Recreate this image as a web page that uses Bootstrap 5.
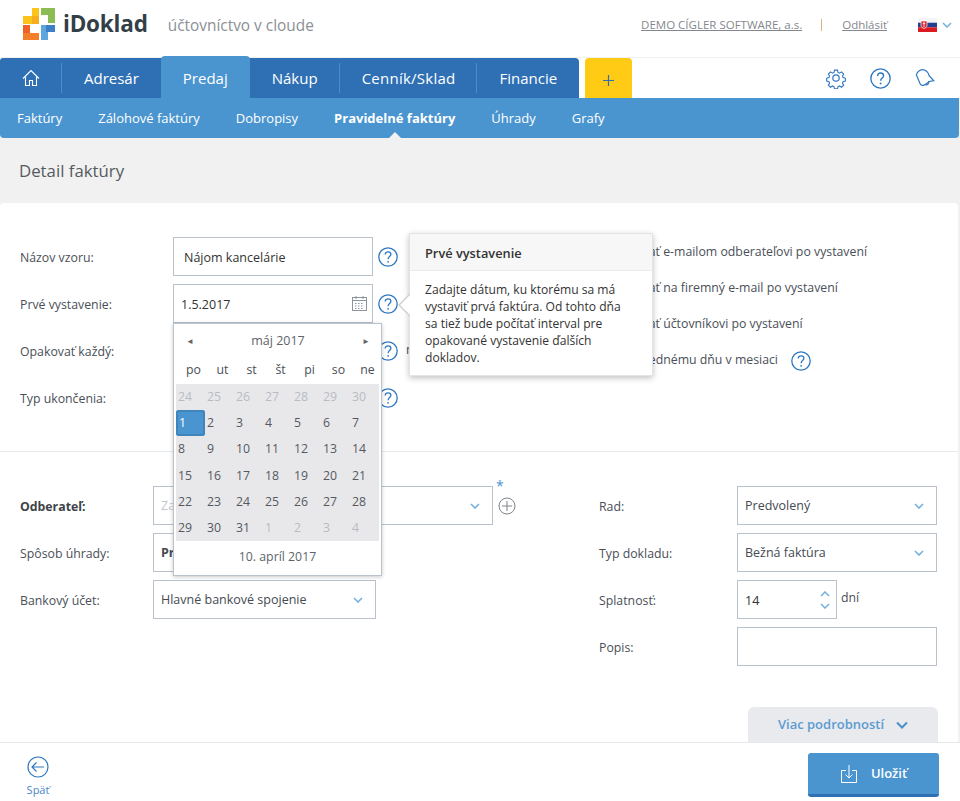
<!DOCTYPE html>
<html lang="sk">
<head>
    <meta charset="utf-8">
    <title>iDoklad</title>
    <link rel="stylesheet" href="https://cdn.jsdelivr.net/npm/bootstrap@5.3.0/dist/css/bootstrap.min.css">
    <style>
        /* Global */
        body {
            font-family: "Open Sans", "Liberation Sans", sans-serif;
            font-size: 12.3px;
            color: #4a4f57;
            background: #f1f1f1;
            height: 801px;
            overflow: hidden;
        }
        a { color: inherit; }

        /* Top header */
        .top-head { height: 58px; background: #fff; padding-left: 23px; padding-bottom: 9px; border-bottom: 1px solid #f1f1f1; }
        .brand-name { font-size: 22.5px; font-weight: 700; color: #333f48; margin-left: 7px; line-height: 1; letter-spacing: -.2px; }
        .brand-claim { font-size: 15.4px; color: #8b9096; margin-left: 20px; margin-top: 4px; }
        .user-links { margin-left: auto; padding-right: 8px; font-size: 11.5px; color: #84888e; margin-top: 2px; }
        .user-sep { width: 1px; height: 12px; background: #d9b48a; margin: 0 20px 0 19px; }
        .flag-box { margin-left: 31px; gap: 5px; }

        /* Main tabs */
        .tab-bar { height: 40px; background: #fff; position: relative; }
        .main-tabs { background: #2f70b5; border-top-right-radius: 4px; border-top-left-radius: 3px; height: 40px; width: 579px; flex-wrap: nowrap; }
        .main-tabs .nav-link { color: #fff; font-size: 15px; padding: 0 22px; line-height: 40px; position: relative; white-space: nowrap; }
        .main-tabs .nav-link.has-sep::after { content: ""; position: absolute; right: 0; top: 5px; height: 30px; width: 1px; background: #4d8cc8; }
        .main-tabs .nav-link.home-link { width: 62px; height: 40px; padding: 0; display: flex; align-items: center; justify-content: center; }
        .main-tabs .nav-link.wide-tab { padding-right: 22px; letter-spacing: .25px; }
        .main-tabs .nav-link.active { background: #4a95d0; height: 42px; margin-top: -2px; line-height: 44px; border-radius: 4px 4px 0 0; }
        .add-tab { width: 47px; height: 40px; margin-left: 6px; padding-top: 4px; background: #ffcb14; border-radius: 4px 4px 0 0; }
        .tool-icons { margin-left: auto; gap: 23px; padding-right: 24px; }

        /* Sub navigation */
        .sub-bar { height: 40px; background: #4a95d0; border-radius: 0 0 4px 4px; width: 959px; padding-left: 17px; gap: 36px; flex-wrap: nowrap; }
        .sub-bar a { color: #fff; text-decoration: none; font-size: 13px; line-height: 40px; position: relative; white-space: nowrap; }
        .sub-bar a.current { font-weight: 700; }
        .sub-bar a.current::after { content: ""; position: absolute; left: 50%; bottom: 0; margin-left: -6px; border: 6px solid transparent; border-top: 0; border-bottom-color: #f1f1f1; }

        /* Page title */
        .page-title { height: 65px; padding: 2px 0 0 19px; font-size: 16.8px; color: #555a60; display: flex; align-items: center; margin: 0; font-weight: 400; }

        /* Form sheet */
        .sheet { width: 958px; height: 539px; background: #fff; border-radius: 4px 4px 0 0; position: relative; }
        .sheet-top { padding: 34px 0 0 20px; height: 249px; border-bottom: 1px solid #e9eaec; }
        .sheet-bottom { padding-top: 34px; }
        .frm-row { height: 39px; margin-bottom: 8px; align-items: center; }
        .frm-label { width: 153px; flex: none; margin-top: 4px; margin-bottom: 0; }
        .frm-label.narrow { width: 133px; }
        .frm-label.right { width: 138px; }
        .form-control, .form-select {
            border: 1px solid #b9c2cd;
            border-radius: 0;
            height: 39px;
            padding-top: 7px;
            padding-bottom: 5px;
            font-size: 12.5px;
            color: #444a52;
            box-shadow: none;
        }
        .form-select {
            padding-left: 7px;
            background-size: 10px 6px;
            background-position: right 12px center;
            background-image: url("data:image/svg+xml,%3Csvg xmlns='http://www.w3.org/2000/svg' viewBox='0 0 10 6'%3E%3Cpath d='M1 1l4 4 4-4' fill='none' stroke='%2373b0e0' stroke-width='1.6'/%3E%3C/svg%3E");
        }
        .w-name { width: 200px; padding-left: 10px; color: #333; }
        .w-date { width: 200px; padding-left: 7px; color: #333; }
        .w-wide { width: 340px; }
        .w-mid { width: 223px; }
        .w-full { width: 200px; }
        .w-num { width: 100px; padding-left: 7px; color: #333; }
        .help-gap { margin-left: 5px; }
        .date-wrap { width: 200px; }
        .cal-ico { position: absolute; right: 6px; top: 12px; }
        .form-select.ph-text { color: #c3c6cb; }
        .bold-label { font-weight: 700; color: #3e4349; }
        .select-strong { font-weight: 700; color: #444a52; }

        /* Checks on the right of the top form */
        .mail-opts { position: absolute; left: 625px; top: 40px; }
        .mail-opts div { height: 36px; line-height: 18px; white-space: nowrap; display: flex; align-items: flex-start; }
        .opt-help { margin-left: 13px; }

        /* Date picker */
        .cal-pop {
            position: absolute; left: 0; top: 39px; z-index: 20;
            width: 209px; height: 253px; background: #fff;
            border: 1px solid #b9c2cd;
            box-shadow: 0 1px 4px rgba(0,0,0,.22);
            padding: 0 2px;
        }
        .cal-head { height: 34px; align-items: center; justify-content: space-between; padding: 0 9px 0 10px; font-size: 12.5px; color: #5e646b; }
        .cal-arrow { font-size: 8px; color: #666; }
        .cal-days, .cal-grid { display: grid; grid-template-columns: repeat(7, 29px); }
        .cal-days { height: 26px; align-items: center; padding: 0 0 1px 3px; }
        .cal-days span { text-align: center; }
        .cal-grid { background: #e8e8eb; grid-auto-rows: 26.2px; }
        .cal-grid span { padding-left: 2px; line-height: 26px; color: #55595f; }
        .cal-grid span.off { color: #b7bcc2; }
        .cal-grid span.picked { background: #4a95d0; color: #fff; border-radius: 3px; box-shadow: inset 0 0 0 2px #3f85bd; padding-left: 3px; }
        .cal-today { text-align: center; line-height: 32px; color: #5e646b; }

        /* Popover */
        .help-pop { position: absolute; left: 409px; top: 30px; width: 244px; max-width: 244px; font-family: inherit; border-radius: 0; border-color: #e4e4e4; box-shadow: 0 2px 6px rgba(0,0,0,.25); z-index: 30; }
        .help-pop .popover-header { background: #f7f7f7; font-size: 12.8px; font-weight: 600; color: #333; padding: 0 15px; line-height: 38px; height: 37px; margin: 0; border-radius: 0; border-bottom: 1px solid #ebebeb; }
        .help-pop .popover-body { padding: 10px 21px 0 15px; font-size: 12.1px; line-height: 17px; color: #333; height: 104px; }
        .help-pop .popover-arrow { position: absolute; top: 59px; left: -12px; width: 12px; height: 24px; z-index: 31; }
        .help-pop .popover-arrow::before,
        .help-pop .popover-arrow::after { content: ""; position: absolute; top: 0; display: block; border-style: solid; border-width: 12px 12px 12px 0; border-color: transparent; }
        .help-pop .popover-arrow::before { left: 0; border-right-color: #cfcfcf; }
        .help-pop .popover-arrow::after { left: 2px; border-right-color: #fff; }

        /* Lower area */
        .col-left { width: 579px; padding-left: 20px; flex: none; }
        .col-right { padding-left: 20px; }
        .req-star { position: absolute; left: 476px; top: -11px; color: #4a95d0; font-size: 14px; }
        .more-btn { position: absolute; right: 20px; bottom: 0; width: 190px; height: 35px; background: #e9eaee; border-radius: 6px 6px 0 0; color: #5c9bd1; font-weight: 600; border: 0; font-size: 13px; gap: 12px; }
        .spin-wrap { width: 100px; }
        .spin-ico { position: absolute; right: 6px; top: 11px; }
        .days-text { margin-left: 4px; margin-top: -3px; }

        /* Footer */
        .page-foot { height: 59px; background: #fff; border-top: 1px solid #e6e7ea; position: relative; z-index: 5; }
        .back-link { width: 76px; text-decoration: none; color: #4a86c5; font-size: 11px; padding-top: 13px; line-height: 1; }
        .back-link svg { margin-bottom: 6px; }
        .save-btn { position: absolute; left: 808px; top: 10px; width: 131px; height: 44px; background: #4a95d0; border: 0; border-bottom: 3px solid #2f70b5; border-radius: 3px; color: #fff; font-weight: 600; font-size: 13px; gap: 13px; }
        .save-btn:hover { background: #4a95d0; color: #fff; }
    </style>
</head>
<body>
    <!-- Icons used more than once -->
    <svg width="0" height="0" class="position-absolute">
        <symbol id="ico-help" viewBox="0 0 20 20">
            <circle cx="10" cy="10" r="9.2" fill="#fff" stroke="#2f78c0" stroke-width="1.3"/>
            <path d="M7.2 7.6c0-1.7 1.2-2.8 2.9-2.8s2.8 1 2.8 2.5c0 2.300-2.800 2.300-2.800 4.900" fill="none" stroke="#2f78c0" stroke-width="1.3"/>
            <circle cx="10.100" cy="14.800" r=".9" fill="#2f78c0"/>
        </symbol>
    </svg>

    <!-- Header -->
    <header class="top-head d-flex align-items-center">
        <svg width="33" height="33" viewBox="0 0 33 33">
            <path d="M9 0h7v16H0V8h9z" fill="#fcc31c"/>
            <path d="M9 8h7v8H9z" fill="#f6ae1d"/>
            <path d="M18 0h14v15h-7V7h-7z" fill="#8dbb54"/>
            <path d="M0 17h7v8h9v7H0z" fill="#f47f2a"/>
            <path d="M0 17h7v8H0z" fill="#ef6128"/>
            <path d="M18 17h14v7h-7v8h-7z" fill="#5ea7de"/>
            <path d="M23 17h9v7h-9z" fill="#3d7fc6"/>
        </svg>
        <span class="brand-name">iDoklad</span>
        <span class="brand-claim">účtovníctvo v cloude</span>
        <div class="user-links d-flex align-items-center">
            <a href="#">DEMO CÍGLER SOFTWARE, a.s.</a>
            <span class="user-sep"></span>
            <a href="#">Odhlásiť</a>
            <span class="flag-box d-flex align-items-center">
                <svg width="19" height="14" viewBox="0 0 19 14">
                    <rect width="19" height="4.700" fill="#f4f4f6"/>
                    <rect y="4.700" width="19" height="4.600" fill="#24408e"/>
                    <rect y="9.300" width="19" height="4.700" fill="#dc1a22"/>
                    <path d="M3 3h6v4.500c0 1.500-1.500 2.500-3 3-1.500-.5-3-1.500-3-3z" fill="#e0262d" stroke="#fff" stroke-width=".7"/>
                    <path d="M6 4v5M4.800 5.500h2.400" stroke="#fff" stroke-width=".8"/>
                </svg>
                <svg width="10" height="6" viewBox="0 0 10 6"><path d="M1 1l4 4 4-4" fill="none" stroke="#73b0e0" stroke-width="1.500"/></svg>
            </span>
        </div>
    </header>

    <!-- Main tabs -->
    <div class="tab-bar d-flex">
        <ul class="nav main-tabs">
            <li class="nav-item">
                <a class="nav-link home-link has-sep" href="#">
                    <svg width="18" height="18" viewBox="0 0 18 18" fill="none" stroke="#fff" stroke-width="1.100"><path d="M1 9.500L9 1.500l8 8M3.500 8v8.500h4v-5h3v5h4V8"/></svg>
                </a>
            </li>
            <li class="nav-item"><a class="nav-link" href="#">Adresár</a></li>
            <li class="nav-item"><a class="nav-link active" href="#">Predaj</a></li>
            <li class="nav-item"><a class="nav-link has-sep" href="#">Nákup</a></li>
            <li class="nav-item"><a class="nav-link has-sep wide-tab" href="#">Cenník/Sklad</a></li>
            <li class="nav-item"><a class="nav-link" href="#">Financie</a></li>
        </ul>
        <a class="add-tab d-flex align-items-center justify-content-center" href="#">
            <svg width="13" height="13" viewBox="0 0 13 13"><path d="M6.500 1v11M1 6.500h11" stroke="#2f70b5" stroke-width="1.200"/></svg>
        </a>
        <div class="tool-icons d-flex align-items-center">
            <svg width="22" height="22" viewBox="0 0 24 24" fill="none" stroke="#2f78c0" stroke-width="1.300"><circle cx="12" cy="12" r="3.500"/><path d="M10.200 2.500h3.600l.6 2.800 1.800.8 2.500-1.500 2.500 2.600-1.500 2.400.7 1.800 2.800.7v3.600l-2.800.6-.7 1.800 1.500 2.400-2.500 2.500-2.500-1.500-1.800.8-.6 2.700h-3.600l-.6-2.700-1.800-.8-2.500 1.500-2.500-2.500 1.500-2.400-.7-1.800-2.800-.6v-3.600l2.800-.7.7-1.800-1.500-2.400 2.500-2.600 2.500 1.500 1.800-.8z" transform="translate(1.100 1.100) scale(.91)"/></svg>
            <svg width="21" height="21"><use href="#ico-help"/></svg>
            <svg width="22" height="22" viewBox="0 0 24 24" fill="none" stroke="#2f78c0" stroke-width="1.300"><path d="M2.500 9.500C3.500 6 8 2.500 12 4.500c3 1.500 4 3.500 4.500 6l5 5.500c-3.500 0-6 1-8.500 3.500-2.500 2-4.500 2-6 .5L2.500 9.500z" transform="translate(0 -1)"/><path d="M16 16.500c.5 2.500-1 4.500-3.500 4" transform="translate(0 -1)"/></svg>
        </div>
    </div>

    <!-- Sub navigation -->
    <nav class="sub-bar d-flex">
        <a href="#">Faktúry</a>
        <a href="#">Zálohové faktúry</a>
        <a href="#">Dobropisy</a>
        <a href="#" class="current">Pravidelné faktúry</a>
        <a href="#">Úhrady</a>
        <a href="#">Grafy</a>
    </nav>

    <h1 class="page-title">Detail faktúry</h1>

    <!-- Form -->
    <main class="sheet">
        <section class="sheet-top position-relative">
            <div class="frm-row d-flex">
                <label class="frm-label">Názov vzoru:</label>
                <input class="form-control w-name" value="Nájom kancelárie">
                <svg class="help-gap" width="20" height="20"><use href="#ico-help"/></svg>
            </div>
            <div class="frm-row d-flex">
                <label class="frm-label">Prvé vystavenie:</label>
                <div class="date-wrap position-relative">
                    <input class="form-control w-date" value="1.5.2017">
                    <svg class="cal-ico" width="15" height="15" viewBox="0 0 15 15" fill="none" stroke="#8d949c"><rect x=".5" y="1.500" width="14" height="13"/><path d="M.5 4.500h14M4 0v3M11 0v3"/><path d="M3 7.500h9M3 10h9M3 12.500h9" stroke-dasharray="1.500 1.500"/></svg>

                    <!-- Date picker -->
                    <div class="cal-pop">
                        <div class="cal-head d-flex"><span class="cal-arrow">◄</span><span>máj 2017</span><span class="cal-arrow">►</span></div>
                        <div class="cal-days"><span>po</span><span>ut</span><span>st</span><span>št</span><span>pi</span><span>so</span><span>ne</span></div>
                        <div class="cal-grid">
                            <span class="off">24</span><span class="off">25</span><span class="off">26</span><span class="off">27</span><span class="off">28</span><span class="off">29</span><span class="off">30</span>
                            <span class="picked">1</span><span>2</span><span>3</span><span>4</span><span>5</span><span>6</span><span>7</span>
                            <span>8</span><span>9</span><span>10</span><span>11</span><span>12</span><span>13</span><span>14</span>
                            <span>15</span><span>16</span><span>17</span><span>18</span><span>19</span><span>20</span><span>21</span>
                            <span>22</span><span>23</span><span>24</span><span>25</span><span>26</span><span>27</span><span>28</span>
                            <span>29</span><span>30</span><span>31</span><span class="off">1</span><span class="off">2</span><span class="off">3</span><span class="off">4</span>
                        </div>
                        <div class="cal-today">10. apríl 2017</div>
                    </div>
                </div>
                <svg class="help-gap" width="20" height="20"><use href="#ico-help"/></svg>
            </div>
            <div class="frm-row d-flex">
                <label class="frm-label">Opakovať každý:</label>
                <div class="date-wrap"></div>
                <svg class="help-gap" width="20" height="20"><use href="#ico-help"/></svg>
                <span class="ms-2">m</span>
            </div>
            <div class="frm-row d-flex">
                <label class="frm-label">Typ ukončenia:</label>
                <div class="date-wrap"></div>
                <svg class="help-gap" width="20" height="20"><use href="#ico-help"/></svg>
            </div>

            <div class="mail-opts">
                <div>Poslať e-mailom odberateľovi po vystavení</div>
                <div>Poslať na firemný e-mail po vystavení</div>
                <div>Poslať účtovníkovi po vystavení</div>
                <div>Poslednému dňu v mesiaci
                    <svg class="opt-help" width="20" height="20"><use href="#ico-help"/></svg>
                </div>
            </div>

            <!-- Popover -->
            <div class="popover bs-popover-end help-pop" role="tooltip">
                <div class="popover-arrow"></div>
                <h3 class="popover-header">Prvé vystavenie</h3>
                <div class="popover-body">Zadajte dátum, ku ktorému sa má vystaviť prvá faktúra. Od tohto dňa sa tiež bude počítať interval pre opakované vystavenie ďalších dokladov.</div>
            </div>
        </section>

        <section class="sheet-bottom d-flex">
            <div class="col-left">
                <div class="frm-row d-flex position-relative">
                    <label class="frm-label narrow bold-label">Odberateľ:</label>
                    <select class="form-select w-wide ph-text"><option>Zadajte názov</option></select>
                    <span class="req-star">*</span>
                    <svg class="help-gap" width="18" height="18" viewBox="0 0 18 18" fill="none" stroke="#7d848b"><circle cx="9" cy="9" r="8"/><path d="M9 4v10M4 9h10"/></svg>
                </div>
                <div class="frm-row d-flex">
                    <label class="frm-label narrow">Spôsob úhrady:</label>
                    <select class="form-select w-mid select-strong"><option>Prevodom</option></select>
                </div>
                <div class="frm-row d-flex">
                    <label class="frm-label narrow">Bankový účet:</label>
                    <select class="form-select w-mid"><option>Hlavné bankové spojenie</option></select>
                </div>
            </div>
            <div class="col-right">
                <div class="frm-row d-flex">
                    <label class="frm-label right">Rad:</label>
                    <select class="form-select w-full"><option>Predvolený</option></select>
                </div>
                <div class="frm-row d-flex">
                    <label class="frm-label right">Typ dokladu:</label>
                    <select class="form-select w-full"><option>Bežná faktúra</option></select>
                </div>
                <div class="frm-row d-flex">
                    <label class="frm-label right">Splatnosť:</label>
                    <div class="spin-wrap position-relative">
                        <input class="form-control w-num" value="14">
                        <svg class="spin-ico" width="12" height="18" viewBox="0 0 12 18" fill="none" stroke="#73b0e0" stroke-width="1.500"><path d="M2 5l4-4 4 4M2 13l4 4 4-4"/></svg>
                    </div>
                    <span class="days-text">dní</span>
                </div>
                <div class="frm-row d-flex">
                    <label class="frm-label right">Popis:</label>
                    <input class="form-control w-full">
                </div>
            </div>
        </section>

        <button class="btn more-btn d-flex align-items-center justify-content-center" type="button">
            Viac podrobností
            <svg width="12" height="8" viewBox="0 0 12 8"><path d="M1 1.500l5 5 5-5" fill="none" stroke="#4a8ecb" stroke-width="2"/></svg>
        </button>
    </main>

    <!-- Footer -->
    <footer class="page-foot">
        <a class="back-link d-flex flex-column align-items-center" href="#">
            <svg width="22" height="22" viewBox="0 0 22 22" fill="none" stroke="#2f78c0" stroke-width="1.200"><circle cx="11" cy="11" r="10"/><path d="M17 11H5M9.500 6.500L5 11l4.500 4.500"/></svg>
            Späť
        </a>
        <button class="btn save-btn d-flex align-items-center justify-content-center" type="button">
            <svg width="18" height="20" viewBox="0 0 18 20" fill="none" stroke="#fff"><path d="M6 6.500H1.500v12h15v-12H12M9 1v13M5.500 10.500L9 14l3.500-3.500"/></svg>
            Uložiť
        </button>
    </footer>

    <script src="https://cdn.jsdelivr.net/npm/bootstrap@5.3.0/dist/js/bootstrap.bundle.min.js"></script>
</body>
</html>
